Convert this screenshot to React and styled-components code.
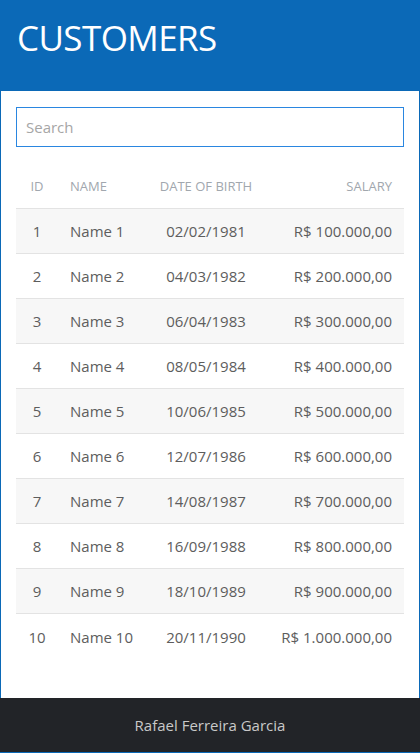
import React from "react";
import styled, { createGlobalStyle } from "styled-components";

const customers = [
  { id: 1, name: "Name 1", birth: "02/02/1981", salary: "R$ 100.000,00" },
  { id: 2, name: "Name 2", birth: "04/03/1982", salary: "R$ 200.000,00" },
  { id: 3, name: "Name 3", birth: "06/04/1983", salary: "R$ 300.000,00" },
  { id: 4, name: "Name 4", birth: "08/05/1984", salary: "R$ 400.000,00" },
  { id: 5, name: "Name 5", birth: "10/06/1985", salary: "R$ 500.000,00" },
  { id: 6, name: "Name 6", birth: "12/07/1986", salary: "R$ 600.000,00" },
  { id: 7, name: "Name 7", birth: "14/08/1987", salary: "R$ 700.000,00" },
  { id: 8, name: "Name 8", birth: "16/09/1988", salary: "R$ 800.000,00" },
  { id: 9, name: "Name 9", birth: "18/10/1989", salary: "R$ 900.000,00" },
  { id: 10, name: "Name 10", birth: "20/11/1990", salary: "R$ 1.000.000,00" },
];

function App() {
  return (
    <>
      <GlobalStyle />
      <Page>
        {/* ------------------------ Header ------------------------ */}
        <Header>
          <h1>CUSTOMERS</h1>
        </Header>
        {/* ------------------------ Content ----------------------- */}
        <Main>
          <SearchInput type="text" placeholder="Search" />
          <Table>
            <HeadRow>
              <Cell align="center">ID</Cell>
              <Cell>NAME</Cell>
              <Cell align="center">DATE OF BIRTH</Cell>
              <Cell align="right">SALARY</Cell>
            </HeadRow>
            {customers.map((c, i) => (
              <Row key={c.id} $striped={i % 2 === 0}>
                <Cell align="center">{c.id}</Cell>
                <Cell>{c.name}</Cell>
                <Cell align="center">{c.birth}</Cell>
                <Cell align="right">{c.salary}</Cell>
              </Row>
            ))}
          </Table>
        </Main>
        {/* ------------------------ Footer ------------------------ */}
        <Footer>Rafael Ferreira Garcia</Footer>
      </Page>
    </>
  );
}

const GlobalStyle = createGlobalStyle`
  * { box-sizing: border-box; }
  body {
    margin: 0;
    font-family: "Open Sans", "Noto Sans", sans-serif;
    background: #ffffff;
  }
`;

const Page = styled.div`
  display: flex;
  flex-direction: column;
  min-height: 100vh;
  border: 1px solid #0b69b7;
`;

const Header = styled.header`
  height: 91px;
  margin: -1px -1px 0;
  background-color: #0b69b7;
  padding: 14px 17px 0;
  h1 {
    margin: 0;
    color: #ffffff;
    font-size: 35px;
    font-weight: 400;
    line-height: 48px;
    letter-spacing: -0.6px;
  }
`;

const Main = styled.main`
  flex: 1;
  padding: 16px 15px 39px;
`;

const SearchInput = styled.input`
  display: block;
  width: 100%;
  height: 40px;
  border: 1px solid #2a86e0;
  padding: 0 9px;
  font-family: inherit;
  font-size: 15px;
  color: #555;
  outline: none;
  &::placeholder {
    color: #a6a6a6;
  }
`;

const Table = styled.div`
  margin-top: 16px;
`;

const HeadRow = styled.div`
  display: grid;
  grid-template-columns: 42px 92px 112px 142px;
  height: 46px;
  align-items: center;
  border-bottom: 1px solid #e3e3e3;
  color: #a1a7ae;
  font-size: 13px;
`;

const Row = styled(HeadRow)`
  height: 45px;
  background-color: ${(p) => (p.$striped ? "#f7f7f7" : "#ffffff")};
  color: #5d5d5d;
  font-size: 15px;
  &:last-child {
    border-bottom: none;
  }
`;

const Cell = styled.div`
  text-align: ${(p) => p.align || "left"};
  padding: ${(p) => (p.align === "right" ? "0 12px 0 0" : p.align === "center" ? "0" : "0 0 0 12px")};
  white-space: nowrap;
`;

const Footer = styled.footer`
  height: 54px;
  margin: 0 -1px;
  background-color: #222428;
  color: #c9c9c9;
  display: flex;
  align-items: center;
  justify-content: center;
  font-size: 15px;
`;

export default App;
